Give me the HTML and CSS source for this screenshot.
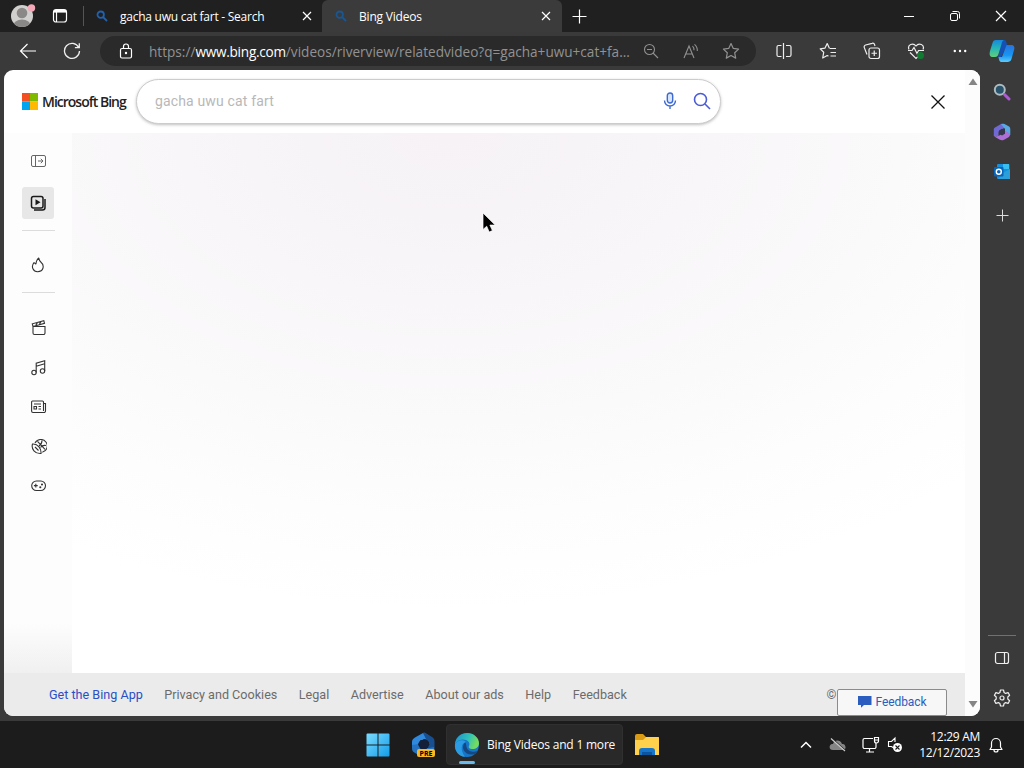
FILE: index.html
```html
<!DOCTYPE html>
<html lang="en">

<head>
    <meta charset="UTF-8">
    <meta name="viewport" content="width=device-width, initial-scale=1.0">
    <title>Bing Videos</title>
    <link rel="stylesheet" href="styles.css">
</head>

<body>
    <div class="tabbar">
        <div class="avatar">
            <svg width="26" height="28" viewBox="0 0 26 28">
                <defs><clipPath id="face"><circle cx="12" cy="14" r="11"/></clipPath></defs>
                <circle cx="12" cy="14" r="11" fill="#d2d0ce"/>
                <g clip-path="url(#face)" fill="#8b8987"><circle cx="12" cy="11" r="5.3"/><ellipse cx="12" cy="24" rx="9" ry="6.5"/></g>
                <circle cx="21.5" cy="6" r="3.7" fill="#f5a9b8"/>
            </svg>
        </div>
        <svg class="tab-menu" width="16" height="16" viewBox="0 0 16 16" fill="none" stroke="#fff">
            <rect x="1.5" y="1.5" width="13" height="12.5" rx="2.5" stroke-width="1.2"/>
            <path d="M2 3.3h12" stroke-width="2.6"/>
            <path d="M4.500 4v10" stroke-width="1.2"/>
        </svg>
        <span class="tab-divider"></span>
        <div class="tab tab-first">
            <svg class="favicon" width="12" height="12" viewBox="0 0 12 12" fill="none" stroke="#1f62b0" stroke-width="1.8"><circle cx="4.7" cy="4.7" r="3.2"/><path d="M7 7l4 4"/></svg>
            <span class="tab-title title-search">gacha uwu cat fart - Search</span>
            <svg class="tab-close" width="10" height="10" viewBox="0 0 10 10" stroke="#fff" stroke-width="1.2"><path d="M1 1l8 8M9 1l-8 8"/></svg>
        </div>
        <div class="tab tab-active">
            <svg class="favicon" width="12" height="12" viewBox="0 0 12 12" fill="none" stroke="#1c5690" stroke-width="1.8"><circle cx="4.7" cy="4.7" r="3.2"/><path d="M7 7l4 4"/></svg>
            <span class="tab-title">Bing Videos</span>
            <svg class="tab-close" width="10" height="10" viewBox="0 0 10 10" stroke="#fff" stroke-width="1.2"><path d="M1 1l8 8M9 1l-8 8"/></svg>
        </div>
        <svg class="new-tab" width="15" height="15" viewBox="0 0 15 15" stroke="#fff" stroke-width="1.2"><path d="M7.5 .5v14M.5 7.5h14"/></svg>
        <div class="window-buttons">
            <span><svg width="12" height="12" viewBox="0 0 12 12" stroke="#fff"><path d="M1 6.5h10"/></svg></span>
            <span><svg width="12" height="12" viewBox="0 0 12 12" stroke="#fff" fill="none"><rect x="1.5" y="3.5" width="7" height="7" rx="1.5"/><path d="M3.5 1.5h5a2 2 0 0 1 2 2v5"/></svg></span>
            <span><svg width="12" height="12" viewBox="0 0 12 12" stroke="#fff" stroke-width="1.2"><path d="M1 1l10 10M11 1L1 11"/></svg></span>
        </div>
    </div>

    <div class="browser">
        <div class="window">
            <div class="toolbar">
                <span class="tool"><svg width="18" height="16" viewBox="0 0 18 16" fill="none" stroke="#fff" stroke-width="1.2"><path d="M17 8H1.5M8.5 1l-7 7 7 7"/></svg></span>
                <span class="tool"><svg width="18" height="18" viewBox="0 0 18 18" fill="none" stroke="#eee" stroke-width="1.3"><path d="M15.7 5.5A7.5 7.5 0 1 0 16.5 9M16.3 1.3v4.4h-4.4"/></svg></span>
                <div class="address">
                    <svg class="lock" width="14" height="16" viewBox="0 0 14 16" fill="none" stroke="#fff" stroke-width="1.2"><rect x="1.5" y="5.5" width="11" height="9.5" rx="1.5"/><path d="M4.500 5.500V3.500a2.500 2.500 0 0 1 5 0v2"/><circle cx="7" cy="10" r=".6" fill="#fff"/></svg>
                    <span class="url">https://<b>www.bing.com</b>/videos/riverview/relatedvideo?q=gacha+uwu+cat+fa...</span>
                    <span class="address-tool"><svg width="16" height="16" viewBox="0 0 16 16" fill="none" stroke="#919191" stroke-width="1.1"><circle cx="6.5" cy="6.5" r="5"/><path d="M10 10l5 5M4 6.5h5"/></svg></span>
                    <span class="address-tool"><svg width="16" height="16" viewBox="0 0 16 16" fill="none" stroke="#919191" stroke-width="1.1"><path d="M1 15L6 3l5 12M2.8 11h6.4M9.5 3.2a5 5 0 0 1 1.500 4M11.500 1.300a8 8 0 0 1 2.800 6.700"/></svg></span>
                    <span class="address-tool"><svg width="18" height="18" viewBox="0 0 18 18" fill="none" stroke="#919191" stroke-width="1.2" stroke-linejoin="round"><path d="M9 1.500l2.300 4.900 5.300.7-3.900 3.700 1 5.300L9 13.500l-4.700 2.600 1-5.300L1.400 7.100l5.300-.7z"/></svg></span>
                </div>
                <span class="tool"><svg width="16" height="16" viewBox="0 0 16 16" fill="none" stroke="#eee" stroke-width="1.2"><path d="M5.500 2.500H2.500a1.500 1.500 0 0 0-1.500 1.500v8a1.500 1.500 0 0 0 1.500 1.500H5.500M10 2.500h3.500a1.500 1.500 0 0 1 1.500 1.500v8a1.500 1.500 0 0 1-1.500 1.500H10M7.500 0v16"/></svg></span>
                <span class="tool"><svg width="18" height="18" viewBox="0 0 18 18" fill="none" stroke="#eee" stroke-width="1.2" stroke-linejoin="round"><path d="M11 6.500H17M11.500 10.500H17M11.500 14H17M10.500 6.500L8.200 1.500 5.900 6.200 1.200 6.900l3.500 3.400-1 5.700 4.500-2.500 1.200.6"/></svg></span>
                <span class="tool"><svg width="18" height="18" viewBox="0 0 18 18" fill="none" stroke="#eee" stroke-width="1.2"><rect x="6" y="6" width="10.500" height="10.500" rx="2"/><path d="M11.250 8.500v5.500M8.500 11.250H14M4 12.500L1.300 5.600A2 2 0 0 1 2.600 3l6.500-1.700a2 2 0 0 1 2.500 1.300l.4 1.400"/></svg></span>
                <span class="tool"><svg width="18" height="18" viewBox="0 0 18 18" fill="none" stroke="#eee" stroke-width="1.200"><path d="M2 7.500C0 3 6 0 9 4c3-4 9-1 7 3.500M3 10.500l6 6 3-3"/><path d="M1 8.500h4L7 5.500l3 6 1.500-3H17"/><circle cx="13.500" cy="13.500" r="3.500" fill="#107c32" stroke="none"/></svg></span>
                <span class="tool"><svg width="14" height="4" viewBox="0 0 14 4" fill="#fff"><circle cx="1.800" cy="2" r="1.200"/><circle cx="7" cy="2" r="1.200"/><circle cx="12.200" cy="2" r="1.200"/></svg></span>
            </div>

            <div class="page">
                <div class="content">
                    <header class="header">
                        <svg class="ms-logo" width="16" height="17" viewBox="0 0 16 17"><path fill="#f25022" d="M0 0h8v8.500H0z"/><path fill="#7fba00" d="M8 0h8v8.500H8z"/><path fill="#00a4ef" d="M0 8.500h8V17H0z"/><path fill="#ffb900" d="M8 8.500h8V17H8z"/></svg>
                        <span class="brand">Microsoft Bing</span>
                        <div class="search">
                            <span class="query">gacha uwu cat fart</span>
                            <svg class="mic" width="14" height="18" viewBox="0 0 14 18" fill="none" stroke="#3e6ad0" stroke-width="1.400"><rect x="4.300" y="1" width="5.400" height="10" rx="2.700" fill="#d6e5fb"/><path d="M1.500 8.500a5.500 5.500 0 0 0 11 0M7 14v3"/></svg>
                            <svg width="18" height="18" viewBox="0 0 18 18" fill="none" stroke="#4a5bd6" stroke-width="1.600"><circle cx="7.500" cy="7.500" r="6"/><path d="M12 12l5 5"/></svg>
                        </div>
                        <svg class="page-close" width="14" height="14" viewBox="0 0 14 14" stroke="#111" stroke-width="1.300"><path d="M.5.5l13 13M13.500.5l-13 13"/></svg>
                    </header>
                    <div class="middle">
                        <nav class="rail">
                            <span class="rail-item"><svg width="16" height="14" viewBox="0 0 16 14" fill="none" stroke="#666"><rect x=".5" y="1.500" width="14" height="11" rx="1.500"/><path d="M4.500 1.500v11M7 7h5M9.800 4.800L12 7 9.800 9.200"/></svg></span>
                            <span class="rail-item selected"><svg width="16" height="16" viewBox="0 0 16 16" fill="none" stroke="#1a1a1a" stroke-width="1.500"><rect x="1.500" y="1.500" width="11.500" height="11.500" rx="2"/><path d="M15 4v8.500a2.500 2.500 0 0 1-2.500 2.500H4"/><path d="M5.500 4.300v6l5-3z" fill="#1a1a1a" stroke="none"/></svg></span>
                            <span class="rail-item trending"><svg width="14" height="16" viewBox="0 0 14 16" fill="none" stroke="#333" stroke-width="1.100" stroke-linejoin="round"><path d="M7.800 1C5.800 2.400 5.300 4.300 4.900 7L3 5.600C-.5 10 2.500 14.700 6.500 14.700c6.500 0 7-6.700 3.500-9.500C8.500 4 8 2.500 7.800 1z"/></svg></span>
                            <div class="categories">
                                <span class="rail-item"><svg width="16" height="16" viewBox="0 0 16 16" fill="none" stroke="#333" stroke-width="1.100"><path d="M2 6.500h12V13a1.500 1.500 0 0 1-1.500 1.500H3.500a1.500 1.500 0 0 1-1.500-1.500zM2 6.500L1.300 3.800 12.800.7l.7 2.700L2 6.500M4.700 5.500L6.500 2.500M8.300 4.500l1.800-3"/></svg></span>
                                <span class="rail-item"><svg width="16" height="16" viewBox="0 0 16 16" fill="none" stroke="#333" stroke-width="1.100"><circle cx="3" cy="12.500" r="2.200"/><circle cx="11.500" cy="11" r="2.200"/><path d="M5.200 12.500V3.200l8.500-2.400V11M5.200 6.200l8.500-2.400"/></svg></span>
                                <span class="rail-item"><svg width="16" height="14" viewBox="0 0 16 14" fill="none" stroke="#333" stroke-width="1.100"><path d="M12.500 11V2A1 1 0 0 0 11.500 1h-10A1 1 0 0 0 .6 2v9A1.500 1.500 0 0 0 2 12.500h11a1.500 1.500 0 0 0 1.500-1.500V3.500h-2M3 4h7M3 6.500h2.500V9H3zM7.500 6.500H10M7.500 9H10"/></svg></span>
                                <span class="rail-item"><svg width="16" height="16" viewBox="0 0 16 16" fill="none" stroke="#333" stroke-width="1.100"><path d="M4 4A6.500 6.500 0 1 1 11.300 13.300M6.500 2.300l7.500 8M11 1.500C11 4 9.500 6 8 7M15 6.500c-2.500-.5-4.500.5-5.500 2"/><path d="M1.500 5C0 10 4 15 10 14.500 10.500 10 7 4.500 1.500 5zM4 8l3.500 3.500"/></svg></span>
                                <span class="rail-item"><svg width="16" height="12" viewBox="0 0 16 12" fill="none" stroke="#333" stroke-width="1.100"><rect x=".7" y="1" width="13.800" height="9.500" rx="4.700"/><path d="M4.800 3.700v3.800M2.900 5.600h3.800"/><circle cx="9.300" cy="7.200" r=".5"/><circle cx="11" cy="4.500" r=".5"/></svg></span>
                            </div>
                        </nav>
                        <main class="stage"></main>
                    </div>
                    <footer class="footer">
                        <a class="app-link">Get the Bing App</a>
                        <a>Privacy and Cookies</a>
                        <a>Legal</a>
                        <a>Advertise</a>
                        <a>About our ads</a>
                        <a>Help</a>
                        <a>Feedback</a>
                        <span class="copyright">©</span>
                        <button class="feedback">
                            <svg width="14" height="13" viewBox="0 0 14 13" fill="#2a5dbd"><path d="M0 1h13.500v9H6l-3 2.700V10H0z"/></svg>
                            Feedback
                        </button>
                    </footer>
                </div>
                <div class="scrollbar">
                    <svg width="10" height="8" viewBox="0 0 10 8" fill="#858585"><path d="M5 .5L9.500 7h-9z"/></svg>
                    <svg width="10" height="8" viewBox="0 0 10 8" fill="#858585"><path d="M5 7.500L9.500 1h-9z"/></svg>
                </div>
            </div>
        </div>

        <aside class="sidebar">
            <svg class="copilot" width="26" height="24" viewBox="0 0 26 24">
                <defs>
                    <linearGradient id="cpA" x2="0" y2="1"><stop stop-color="#1689dc"/><stop offset=".5" stop-color="#28b7b4"/><stop offset="1" stop-color="#62cf79"/></linearGradient>
                    <linearGradient id="cpB" x2="0" y2="1"><stop stop-color="#2872df"/><stop offset=".6" stop-color="#1696f3"/><stop offset="1" stop-color="#5ecbf8"/></linearGradient>
                </defs>
                <path d="M12 1h3c2 0 2.500 2 3 5l-6 12-3 1z" fill="#1551b5"/>
                <path d="M17.500 6H22c3 0 4 2 3 5l-2.500 9c-.8 2.200-2 3-4 3h-6c-2 0-2.500-2-3-5h3.500z" fill="url(#cpB)"/>
                <path d="M7 1h8c-1.500.5-2 2-2.500 4L9.500 15c-.6 2-1.500 3-3.500 3H4c-3 0-4-2-3-6L3.500 4C4 2 5 1 7 1z" fill="url(#cpA)"/>
            </svg>
            <svg class="side-search" width="18" height="18" viewBox="0 0 18 18" fill="none"><circle cx="6.800" cy="6.800" r="5" fill="#28536a" stroke="#aebbc0" stroke-width="2"/><path d="M11.500 11.500l4.500 4.500" stroke="#ae59d5" stroke-width="3" stroke-linecap="round"/></svg>
            <svg class="office" width="18" height="18" viewBox="0 0 18 18"><path d="M8 1L2 4.500C1 5 .8 6 .8 7v6l4.700 1V8.500L11 5V1z" fill="#7069d4"/><path d="M8 1c2-.7 4 0 5 .7l3 1.800c1 .7 1.300 1.500 1.300 3V12L12 8V6z" fill="#58a8e3"/><path d="M.8 12.500c3 2 5 .5 7-1l4-1V7.500l5.300 3.500c0 1.500-.5 2.500-1.600 3.200l-4.500 2.500c-1.500.8-3 .7-4.500-.2L2.500 14.300z" fill="#ae70d8"/><path d="M9 5.700l3 1.800v3.300l-3 1.800-3-1.800V7.500z" fill="#34384e"/></svg>
            <svg class="outlook" width="18" height="18" viewBox="0 0 18 18"><rect x="4" y="1" width="12.500" height="15" rx="1" fill="#1490df"/><path d="M10 1h6v5h-6z" fill="#38bfef"/><path d="M10 10l7-4v10H5z" fill="#2a9fdb"/><rect x="1" y="4" width="9.500" height="9.500" rx="1" fill="#0864b6"/><circle cx="5.800" cy="8.700" r="2.500" fill="none" stroke="#fff" stroke-width="1.400"/></svg>
            <svg class="side-add" width="13" height="13" viewBox="0 0 13 13" stroke="#ddd"><path d="M6.500.5v12M.5 6.500h12"/></svg>
            <div class="side-bottom">
                <svg width="16" height="14" viewBox="0 0 16 14" fill="none" stroke="#eee" stroke-width="1.200"><rect x="1.500" y="1.500" width="13" height="11" rx="2"/><path d="M10.500 1.500v11"/></svg>
                <svg width="18" height="18" viewBox="0 0 18 18" fill="none" stroke="#eee" stroke-width="1.200" stroke-linejoin="round"><path d="M7.500 1h3l.6 2.500 1.500.9 2.500-.8 1.500 2.700L14.800 8v2l1.800 1.700-1.500 2.700-2.500-.8-1.500.9-.6 2.500h-3l-.6-2.500-1.500-.9-2.500.8-1.500-2.700L3.200 10V8L1.400 6.300l1.500-2.700 2.500.8 1.500-.9z"/><circle cx="9" cy="9" r="2"/></svg>
            </div>
        </aside>
    </div>

    <div class="taskbar">
        <svg class="start" width="24" height="24" viewBox="0 0 24 24"><defs><linearGradient id="win" x2="1" y2="1"><stop stop-color="#7bdcff"/><stop offset="1" stop-color="#139de9"/></linearGradient></defs><path fill="url(#win)" d="M1.500.5h10v11H.5v-10a1 1 0 0 1 1-1zM12.500.5h10a1 1 0 0 1 1 1v10h-11zM.5 12.500h11v11h-10a1 1 0 0 1-1-1zM12.500 12.500h11v10a1 1 0 0 1-1 1h-10z"/></svg>
        <svg class="preview" width="26" height="26" viewBox="0 0 26 26"><path d="M12 1L4 5.500C2 6.700 1 8 1 10v6l5 2 2-8 5-3 6 1V4.500L14 1z" fill="#2f8ade"/><path d="M12 1c1-.6 1.500-.5 2.500 0L21 5c2 1.200 2.500 2.500 2.500 5v7L17 16l1-6-3-3z" fill="#174f91"/><path d="M1 13l7-1 3 4h7l5-1v4l-7 5H9L2.500 20C1.500 19 1 18 1 16z" fill="#2472c0"/><path d="M9.500 8h6l3 4.500-3 4.500h-6L7 12.500z" fill="#142039"/><rect x="6" y="17" width="18" height="8" rx="2" fill="#f7b926"/><text x="15" y="24" text-anchor="middle" class="pre-label">PRE</text></svg>
        <div class="task-active">
            <svg width="26" height="26" viewBox="0 0 26 26"><defs><linearGradient id="edgeA" x2="1" y2=".3"><stop stop-color="#218ed1"/><stop offset=".6" stop-color="#2fc2b8"/><stop offset="1" stop-color="#76db5e"/></linearGradient></defs><circle cx="13" cy="13" r="12" fill="#1676ca"/><path d="M1 12C2 4.500 7.500 1 13 1c7 0 12 5 12 10 0 4-3 6-6.500 6-3 0-4.500-1.500-3.500-3C18 8 6 4 1 12z" fill="url(#edgeA)"/><path d="M11 10c-5 6 0 13 7 12.500 3 0 5-2 6-3.500-4 1.500-10 1-11.500-4-.5-2-.2-4-1.500-5z" fill="#154780"/><path d="M1 12c3-4 8-5 11-2-5 1-6 8-1 14.800C5 24.500 0 19 1 12z" fill="#2b9ce4"/></svg>
            <span>Bing Videos and 1 more</span>
        </div>
        <svg class="explorer" width="26" height="24" viewBox="0 0 26 24"><path d="M1 3a2 2 0 0 1 2-2h6l3 3h12a1 1 0 0 1 1 1v7H1z" fill="#d99a16"/><path d="M1 7h8l3-3h12a1 1 0 0 1 1 1v17H1z" fill="#fed04c"/><path d="M5 22v-4a3 3 0 0 1 3-3h10a3 3 0 0 1 3 3v4z" fill="#1675c8"/><path d="M8 19h10v3H8z" fill="#0b559e"/></svg>
        <div class="tray">
            <svg class="chevron" width="12" height="8" viewBox="0 0 12 8" fill="none" stroke="#fff" stroke-width="1.500"><path d="M1 6.500l5-5 5 5"/></svg>
            <svg class="cloud" width="18" height="16" viewBox="0 0 18 16"><path d="M4 13C-1 13 0 6 4 7c1-4 7-5 9 0 4-1 5 6 1 6z" fill="#858585"/><path d="M2.800 1.500l14 12.500" stroke="#1c1c1c" stroke-width="1.500"/><path d="M2 1.500l14 12.500" stroke="#ccc" stroke-width="1.200"/></svg>
            <svg class="network" width="18" height="18" viewBox="0 0 18 18" fill="none" stroke="#fff" stroke-width="1.200"><path d="M11 2.500H2.500A1.500 1.500 0 0 0 1 4v7a1.500 1.500 0 0 0 1.500 1.500h10A1.500 1.500 0 0 0 14 11V7.500M7.500 12.500V16M4 16h8M12.500 1.500h4V5a2 2 0 0 1-4 0zM12.500 4h4"/></svg>
            <svg class="volume" width="18" height="18" viewBox="0 0 18 18" fill="none" stroke="#fff" stroke-width="1.100"><path d="M8 6V2L4.500 5.500H1.500v5h3l1.500 1"/><circle cx="10.500" cy="11.500" r="4.500" fill="#fff" stroke="none"/><path d="M8.500 9.500l4 4M12.500 9.500l-4 4" stroke="#1c1c1c"/></svg>
            <div class="clock"><span>12:29 AM</span><span>12/12/2023</span></div>
            <svg class="bell" width="14" height="16" viewBox="0 0 14 16" fill="none" stroke="#fff" stroke-width="1.200" stroke-linejoin="round"><path d="M2.500 10V6a4.500 4.500 0 0 1 9 0v4l1.500 2.500H1zM5 13a2 2 0 0 0 4 0"/></svg>
        </div>
    </div>

    <svg class="cursor" width="15" height="22" viewBox="0 0 15 22"><path d="M1 1v16.500l3.700-3.300 2.500 5.800 3.200-1.400-2.500-5.500h5.300z" fill="#000" stroke="#fff" stroke-width=".7"/></svg>
</body>

</html>
```
FILE: styles.css
```css
* {
    box-sizing: border-box;
}

body {
    position: relative;
    margin: 0;
    width: 1024px;
    height: 768px;
    overflow: hidden;
    display: flex;
    flex-direction: column;
    background-color: #3a3a3a;
    font-family: "Open Sans", sans-serif;
    font-size: 12px;
    color: white;
}

svg {
    display: block;
    flex: none;
}

/* tabs */
.tabbar {
    display: flex;
    align-items: center;
    height: 32px;
    flex: none;
    background-color: #202020;
}

.avatar {
    margin: 0 16px 0 10px;
}

.tab-divider {
    width: 1px;
    height: 20px;
    margin-left: 15px;
    background-color: #555;
}

.tab {
    display: flex;
    align-items: center;
    height: 32px;
    white-space: nowrap;
}

.tab-first {
    width: 238px;
    padding: 0 10px 0 12px;
}

.tab-active {
    width: 240px;
    padding: 0 11px 0 13px;
    background-color: #3b3b3b;
    border-radius: 6px 6px 0 0;
}

.tab-title {
    margin-left: 12px;
    letter-spacing: -0.2px;
}

.title-search {
    letter-spacing: -0.25px;
}

.tab-close {
    margin-left: auto;
}

.new-tab {
    margin-left: 10px;
}

.window-buttons {
    display: flex;
    margin-left: auto;
}

.window-buttons span {
    width: 46px;
    display: flex;
    justify-content: center;
}

.browser {
    display: flex;
    flex: none;
    height: 689px;
    background-color: #3a3a3a;
}

.window {
    width: 980px;
}

.toolbar {
    display: flex;
    align-items: center;
    height: 38px;
    padding-left: 6px;
}

.tool {
    width: 44px;
    flex: none;
    display: flex;
    justify-content: center;
}

.address {
    display: flex;
    align-items: center;
    flex: none;
    width: 656px;
    height: 30px;
    margin: 0 6px;
    padding: 0 5px 0 19px;
    border-radius: 15px;
    background-color: #2a2a2a;
}

.url {
    width: 482px;
    margin-left: 16px;
    margin-right: auto;
    font-size: 13.600px;
    white-space: nowrap;
    color: #929292;
}

.url b {
    font-weight: normal;
    letter-spacing: -0.25px;
    color: #fff;
}

.address-tool {
    width: 40px;
    display: flex;
    justify-content: center;
}

/* page */
.page {
    display: flex;
    height: 646px;
    margin-left: 4px;
    border-radius: 9px;
    overflow: hidden;
    background-color: #fff;
    font-family: Roboto, sans-serif;
}

.content {
    width: 961px;
}

.header {
    display: flex;
    align-items: center;
    height: 63px;
    padding-left: 18px;
}

.brand {
    width: 94px;
    margin-left: 4px;
    font-family: "Open Sans", sans-serif;
    font-size: 14px;
    font-weight: 600;
    letter-spacing: -1px;
    white-space: nowrap;
    color: #222;
}

.search {
    display: flex;
    align-items: center;
    width: 585px;
    height: 45px;
    padding: 0 10px 2px 18px;
    border: 1px solid #ccc;
    border-radius: 23px;
    background-color: #fff;
    box-shadow: 0 1px 3px rgba(0, 0, 0, 0.25);
}

.query {
    font-size: 14px;
    letter-spacing: 0.15px;
    color: #b8b8b8;
}

.mic {
    margin-left: auto;
    margin-right: 16px;
}

.search svg:last-child {
    margin-right: -1px;
}

.page-close {
    margin-left: auto;
    margin-right: 20px;
}

.middle {
    display: flex;
    height: 540px;
}

.rail {
    width: 68px;
    padding: 12px 0 0 18px;
    background: linear-gradient(#fdfdfd 490px, #f0f0f0 540px);
}

.rail-item {
    display: flex;
    align-items: center;
    justify-content: center;
    width: 33px;
    height: 32px;
}

.selected {
    width: 32px;
    margin-top: 10px;
    border-radius: 3px;
    background-color: #e7e7e7;
}

.trending {
    height: 63px;
    margin-top: 11px;
    padding-top: 6px;
    padding-right: 2px;
    border-top: 1px solid #dcdcdc;
    border-bottom: 1px solid #dcdcdc;
}

.categories {
    display: flex;
    flex-direction: column;
    gap: 7.500px;
    padding-top: 19px;
}

.stage {
    flex: 1;
    background: radial-gradient(ellipse 760px 480px at 42% 0, #f6f2f6, #f8f6f8 35%, #fbfafb 60%, #fdfdfd 80%, #fff);
}

.footer {
    display: flex;
    align-items: center;
    height: 43px;
    padding: 0 18px 0 45px;
    gap: 21.500px;
    background-color: #ebebeb;
    font-size: 12.600px;
    white-space: nowrap;
    color: #6b6b6b;
}

.app-link {
    color: #2a4fc4;
}

.copyright {
    margin-left: auto;
    margin-right: -21px;
}

.feedback {
    display: flex;
    align-items: center;
    justify-content: center;
    gap: 4px;
    align-self: flex-end;
    width: 110px;
    height: 27px;
    padding: 0 0 2px;
    border: 1px solid #8b8b8b;
    border-radius: 2px;
    background-color: #f7f7f7;
    font-family: Roboto, sans-serif;
    font-size: 12px;
    letter-spacing: -0.1px;
    color: #2a5dbd;
}

.scrollbar {
    width: 15px;
    display: flex;
    flex-direction: column;
    align-items: center;
    justify-content: space-between;
    padding: 8px 0;
    background-color: #fcfcfc;
}

/* edge sidebar */
.sidebar {
    display: flex;
    flex-direction: column;
    align-items: center;
    width: 44px;
    padding-top: 7px;
}

.side-search {
    margin-top: 20px;
}

.office {
    margin-top: 22px;
}

.outlook {
    margin-top: 22px;
}

.side-add {
    margin-top: 28px;
}

.side-bottom {
    display: flex;
    flex-direction: column;
    align-items: center;
    gap: 24px;
    width: 28px;
    height: 86px;
    margin-top: auto;
    padding-top: 15px;
    border-top: 1px solid #717171;
}

/* taskbar */
.taskbar {
    display: flex;
    align-items: center;
    height: 47px;
    flex: none;
    background-color: #1c1c1c;
}

.start {
    margin-left: 366px;
}

.preview {
    margin-left: 21px;
}

.pre-label {
    font-family: "Open Sans", sans-serif;
    font-size: 7px;
    font-weight: bold;
}

.task-active {
    position: relative;
    display: flex;
    align-items: center;
    gap: 7px;
    width: 177px;
    height: 41px;
    margin-left: 9px;
    padding-left: 7px;
    border: 1px solid #303030;
    border-radius: 4px;
    background-color: #292929;
    white-space: nowrap;
    letter-spacing: -0.2px;
}

.task-active::after {
    content: "";
    position: absolute;
    left: 12px;
    bottom: 0;
    width: 16px;
    height: 3px;
    border-radius: 2px;
    background-color: #69b9ea;
}

.explorer {
    margin-left: 11px;
}

.tray {
    display: flex;
    align-items: center;
    margin-left: auto;
    padding-right: 21px;
}

.cloud {
    margin-left: 17px;
}

.network {
    margin-left: 15px;
}

.volume {
    margin-left: 7px;
}

.clock {
    display: flex;
    flex-direction: column;
    width: 75px;
    text-align: right;
    line-height: 16px;
    letter-spacing: -0.3px;
}

.bell {
    margin-left: 9px;
}

.cursor {
    position: absolute;
    left: 482px;
    top: 212px;
}
```
